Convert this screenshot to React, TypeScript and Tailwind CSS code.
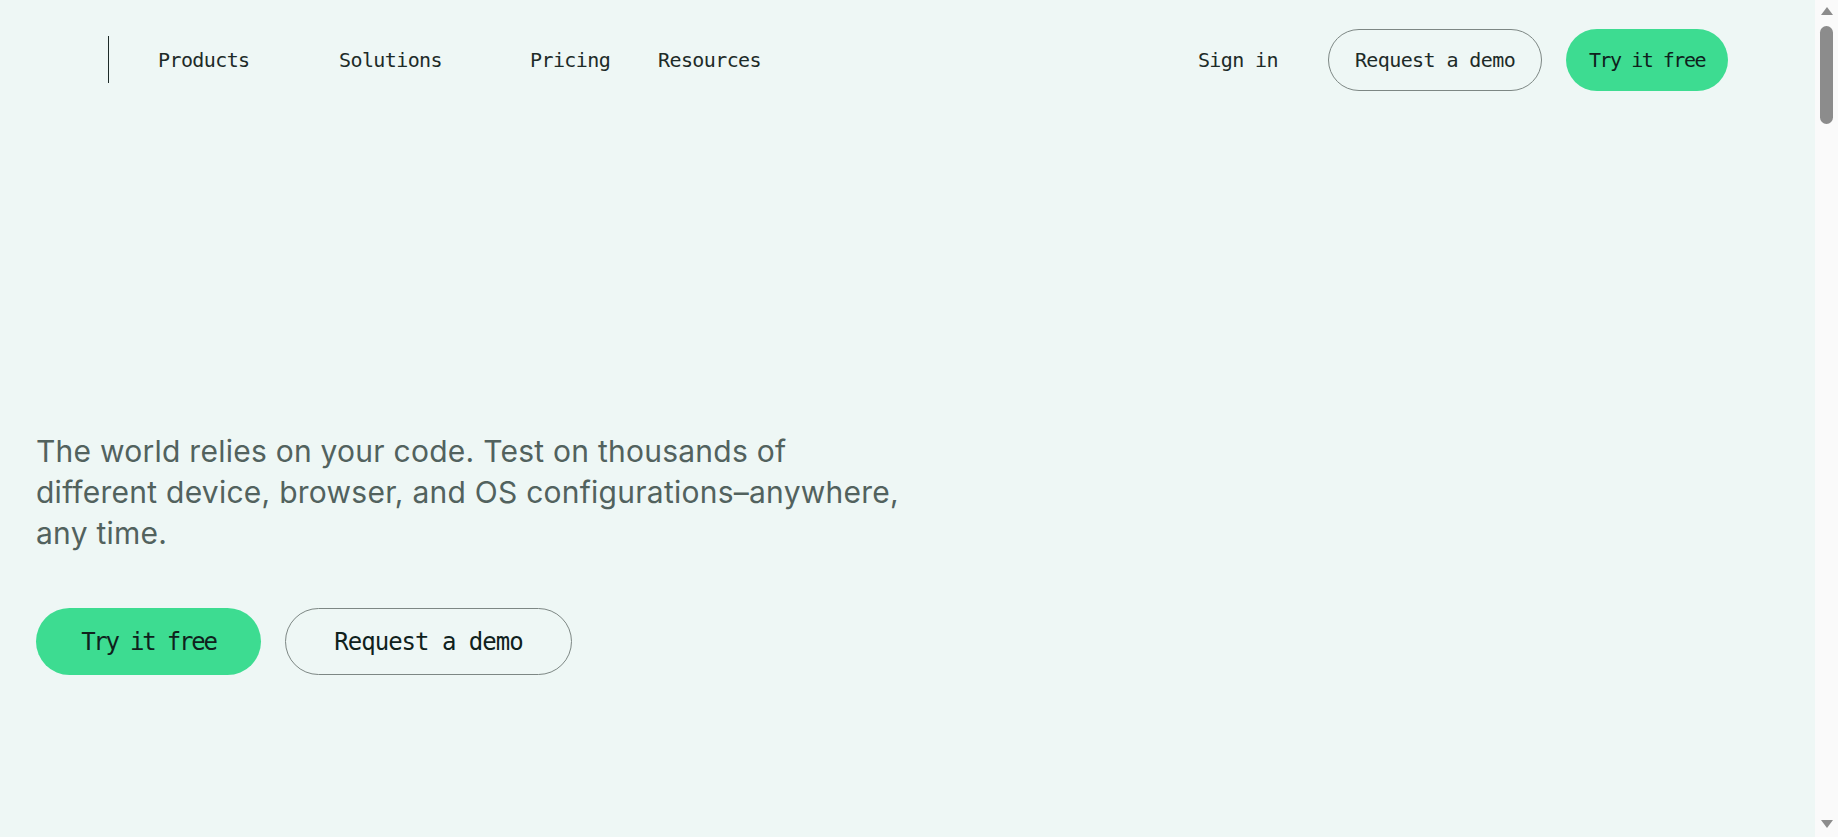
import { ReactNode } from "react";

const mono = "font-['DejaVu_Sans_Mono',monospace]";

function NavLink({ children, width }: { children: ReactNode; width?: string }) {
  return (
    <a
      href="#"
      className={`${width ?? ""} text-[20px] tracking-[-0.6px] text-[#1d2b28] ${mono}`}
    >
      {children}
    </a>
  );
}

function Scrollbar() {
  return (
    <aside className="flex w-[23px] shrink-0 flex-col items-center bg-[#fafafa]">
      <svg width="14" height="10" viewBox="0 0 14 10" className="mt-[6px]">
        <polygon points="7,1 13,9 1,9" fill="#8c8c8c" />
      </svg>
      <div className="mt-[10px] h-[98px] w-[13px] rounded-full bg-[#8c8c8c]" />
      <div className="flex-1" />
      <svg width="14" height="10" viewBox="0 0 14 10" className="mb-[8px]">
        <polygon points="1,1 13,1 7,9" fill="#8c8c8c" />
      </svg>
    </aside>
  );
}

export default function App() {
  return (
    <div className="flex h-[837px] w-full overflow-hidden bg-[#eef7f5]">
      <main className="flex-1">
        <header className="flex h-[120px] items-center pl-9 pr-[87px]">
          <div className="w-[72px]" />
          <div className="mt-[-1px] h-[47px] w-px bg-[#1d2b28]" />
          <nav className="ml-[49px] flex items-center">
            <NavLink width="w-[181px]">Products</NavLink>
            <NavLink width="w-[191px]">Solutions</NavLink>
            <NavLink width="w-[128px]">Pricing</NavLink>
            <NavLink>Resources</NavLink>
          </nav>
          <div className="ml-auto flex items-center">
            <NavLink>Sign in</NavLink>
            <a
              href="#"
              className={`ml-[50px] flex h-[62px] w-[214px] items-center justify-center rounded-full border border-[#7d8784] text-[20px] tracking-[-0.6px] text-[#1d2b28] ${mono}`}
            >
              Request a demo
            </a>
            <a
              href="#"
              className={`ml-[24px] flex h-[62px] w-[162px] items-center justify-center rounded-full bg-[#3ddc91] text-[20px] tracking-[-1.5px] text-[#0f211c] ${mono}`}
            >
              Try it free
            </a>
          </div>
        </header>

        <section className="px-9 pt-[311px]">
          <p className="max-w-[900px] font-['Inter',sans-serif] text-[30px] leading-[41px] tracking-[0.25px] text-[#52625e]">
            The world relies on your code. Test on thousands of
            <br />
            different device, browser, and OS configurations–anywhere,
            <br />
            any time.
          </p>
          <div className="mt-[54px] flex gap-[24px]">
            <a
              href="#"
              className={`flex h-[67px] w-[225px] items-center justify-center rounded-full bg-[#3ddc91] text-[24px] tracking-[-2.2px] text-[#0f211c] ${mono}`}
            >
              Try it free
            </a>
            <a
              href="#"
              className={`flex h-[67px] w-[287px] items-center justify-center rounded-full border border-[#7d8784] text-[24px] tracking-[-1px] text-[#0f211c] ${mono}`}
            >
              Request a demo
            </a>
          </div>
        </section>
      </main>
      <Scrollbar />
    </div>
  );
}
